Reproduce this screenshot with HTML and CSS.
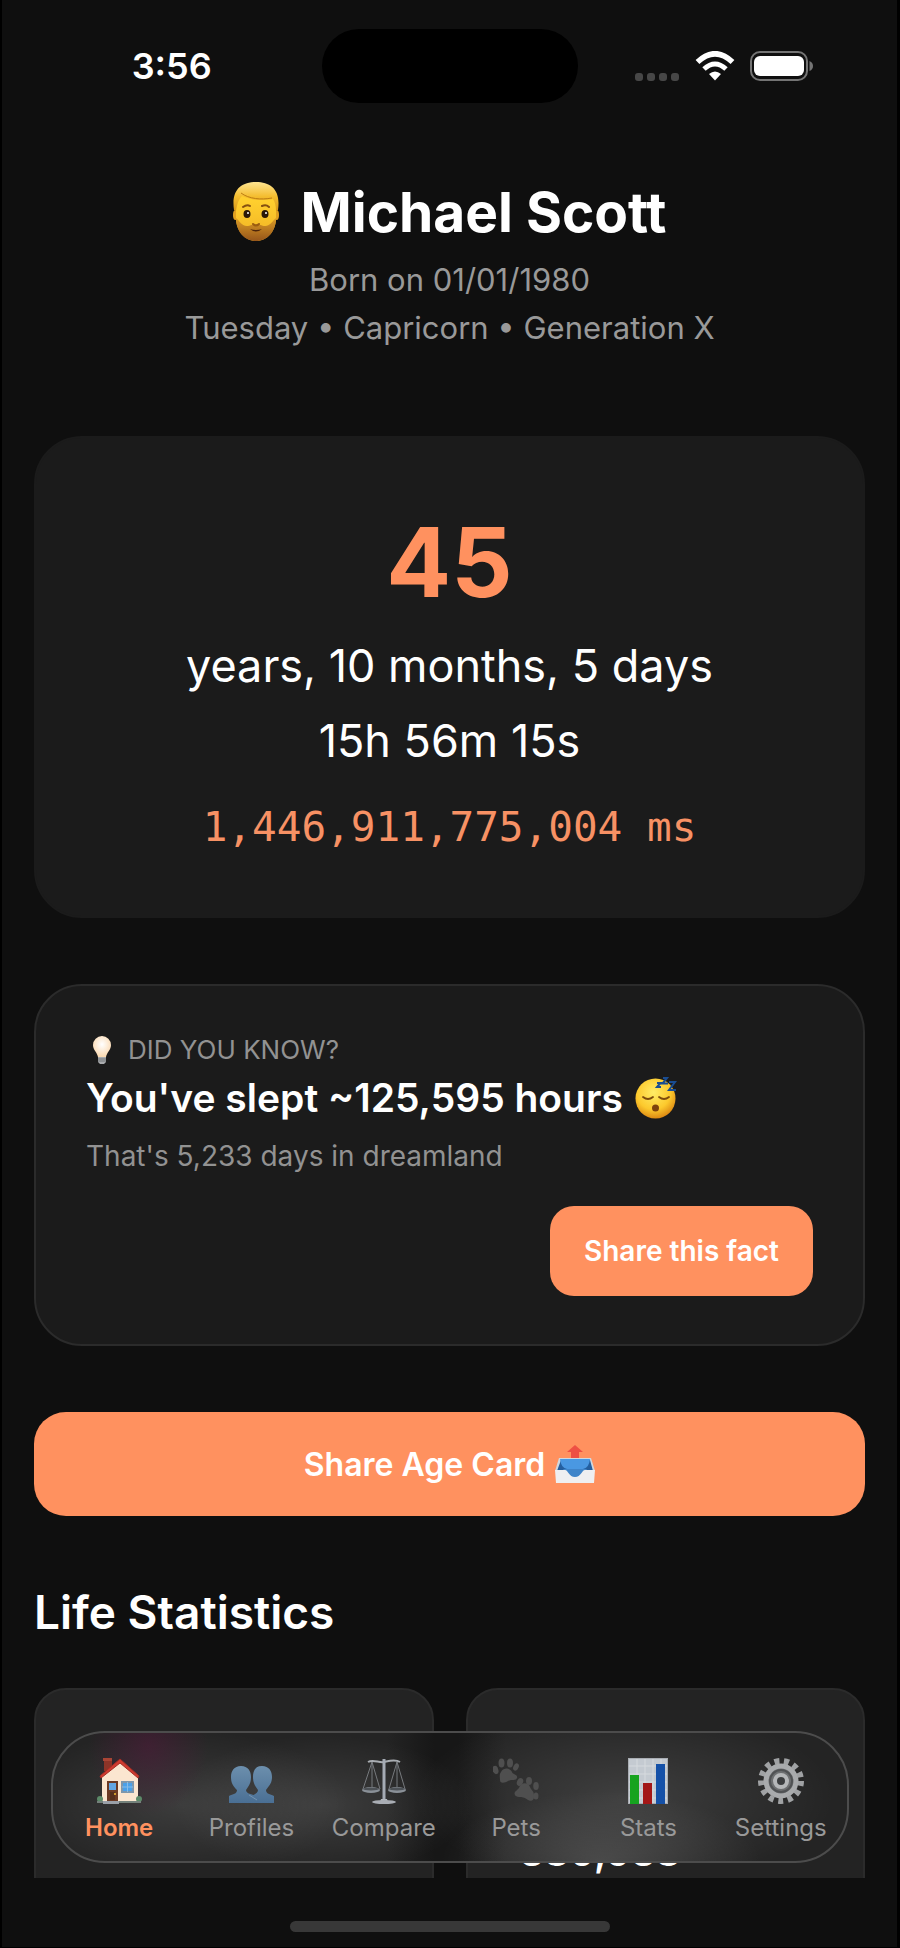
FILE: index.html
```html
<!DOCTYPE html>
<html lang="en">

<head>
    <meta charset="UTF-8">
    <meta name="viewport" content="width=device-width, initial-scale=1.0">
    <title>Michael Scott</title>
    <link rel="stylesheet" href="styles.css">
</head>

<body>
    <div class="app">
        <header class="status-bar">
            <time class="clock">3:56</time>
            <div class="island"></div>
            <div class="status-icons">
                <svg class="signal" viewBox="0 0 45 8" fill="#474747">
                    <rect width="8" height="8" rx="3" />
                    <rect x="12" width="8" height="8" rx="3" />
                    <rect x="24" width="8" height="8" rx="3" />
                    <rect x="36" width="8" height="8" rx="3" />
                </svg>
                <svg class="wifi" viewBox="0 0 40 30" fill="none" stroke="#fff">
                    <path d="M2.500 11Q20-5.500 37.500 11" stroke-width="5.500" />
                    <path d="M9 18Q20 8 31 18" stroke-width="5" />
                    <path d="M20 29.500L14 23Q20 18 26 23Z" fill="#fff" stroke="none" />
                </svg>
                <svg class="battery" viewBox="0 0 64 30">
                    <rect x="1" y="1" width="56" height="28" rx="9" fill="none" stroke="#747474" stroke-width="2" />
                    <rect x="4" y="5" width="50" height="20" rx="6" fill="#fff" />
                    <path d="M59.500 10q3.500 1.500 3.500 5t-3.500 5z" fill="#747474" />
                </svg>
            </div>
        </header>

        <main class="content">
            <section class="profile">
                <h1 class="name">
                    <svg class="face" viewBox="0 0 46 60">
                        <defs>
                            <linearGradient id="skin" x1="0" y1="0" x2="0" y2="1">
                                <stop offset=".3" stop-color="#ffcf2e" />
                                <stop offset="1" stop-color="#f0b124" />
                            </linearGradient>
                            <linearGradient id="beard" x1="0" y1="0" x2="0" y2="1">
                                <stop offset="0" stop-color="#dc9c26" />
                                <stop offset="1" stop-color="#96551a" />
                            </linearGradient>
                            <linearGradient id="hair" x1="0" y1="0" x2="0" y2="1">
                                <stop offset="0" stop-color="#ffe591" />
                                <stop offset=".5" stop-color="#f4bd2f" />
                                <stop offset="1" stop-color="#d6971a" />
                            </linearGradient>
                        </defs>
                        <ellipse cx="2.500" cy="33" rx="2.500" ry="5" fill="#e0a020" />
                        <ellipse cx="43.500" cy="33" rx="2.500" ry="5" fill="#e0a020" />
                        <path d="M3 18C3 6 12 2 23 2s20 4 20 16v18c0 13-9 23-20 23S3 49 3 36z" fill="url(#skin)" />
                        <path d="M3 36c3 2 6 9 12 8 4-1 5-2 8-2s4 1 8 2c6 1 9-6 12-8 0 14-9 23-20 23S3 50 3 36z" fill="url(#beard)" />
                        <path d="M1 28C-2 8 8 0 23 0s25 8 22 28l-2 1c0-5-1-9-3-12-11 2-22 1-31-3-4 4-5 9-6 15z" fill="url(#hair)" />
                        <path d="M8 11c8 6 20 7 31 5" fill="none" stroke="#bd7d13" stroke-width="1" />
                        <path d="M10 25q4-3 7-1M29 24q4-2 7 1" fill="none" stroke="#855010" stroke-width="2" stroke-linecap="round" />
                        <ellipse cx="14" cy="32" rx="3.500" ry="4" fill="#2b1708" />
                        <ellipse cx="32" cy="32" rx="3.500" ry="4" fill="#2b1708" />
                        <circle cx="15" cy="31" r="1" fill="#fff" />
                        <circle cx="33" cy="31" r="1" fill="#fff" />
                        <path d="M20 42q3 3 6 0" fill="none" stroke="#9a5c10" stroke-width="2" stroke-linecap="round" />
                        <path d="M17 47q6 2 12 0-6 5-12 0z" fill="#4c240a" />
                    </svg>
                    Michael Scott
                </h1>
                <p class="meta">Born on 01/01/1980</p>
                <p class="meta">Tuesday • Capricorn • Generation X</p>
            </section>

            <section class="card age-card">
                <div class="years">45</div>
                <div class="age-line">years, 10 months, 5 days</div>
                <div class="age-line">15h 56m 15s</div>
                <div class="millis">1,446,911,775,004 ms</div>
            </section>

            <section class="card fact-card">
                <div class="fact-label">
                    <svg class="bulb" viewBox="0 0 20 30">
                        <defs>
                            <radialGradient id="glow" cx=".5" cy=".4" r=".6">
                                <stop offset="0" stop-color="#fff" />
                                <stop offset="1" stop-color="#fbd9b0" />
                            </radialGradient>
                        </defs>
                        <path d="M10 1a9 9 0 0 1 9 9c0 5-4 7-5 12H6C5 17 1 15 1 10a9 9 0 0 1 9-9z" fill="url(#glow)" />
                        <path d="M6 22h8v5l-2 2H8l-2-2z" fill="#a9abae" />
                        <path d="M6 24h8M6 26h8" stroke="#737679" />
                    </svg>
                    DID YOU KNOW?
                </div>
                <h2 class="fact-title">
                    You've slept ~125,595 hours
                    <svg class="sleepy" viewBox="0 0 42 42">
                        <defs>
                            <radialGradient id="sleep" cx=".45" cy=".35" r=".65">
                                <stop offset="0" stop-color="#ffec66" />
                                <stop offset=".65" stop-color="#fcc92d" />
                                <stop offset="1" stop-color="#dd8a13" />
                            </radialGradient>
                        </defs>
                        <circle cx="20.500" cy="21.500" r="20" fill="url(#sleep)" />
                        <path d="M8 20q5 4 10 0M24 20q5 4 10 0" fill="none" stroke="#7d4b0c" stroke-width="1.800" stroke-linecap="round" />
                        <circle cx="20.500" cy="31" r="3.500" fill="#7d420c" />
                        <path d="M22 6h3.500L22 10h4M28 1h4l-4.500 5.500H33M34 5h6l-6 8h7" fill="none" stroke="#1a4d91" stroke-width="2" />
                    </svg>
                </h2>
                <p class="fact-text">That's 5,233 days in dreamland</p>
                <button class="btn btn-fact">Share this fact</button>
            </section>

            <button class="btn btn-share">
                Share Age Card
                <svg class="outbox" viewBox="0 0 40 40">
                    <path d="M20 1l8 7h-4v8h-8V8h-4z" fill="#ee5044" />
                    <path d="M4 14h32l4 13H0z" fill="#d0d7df" />
                    <path d="M6 16h29l3 11H2z" fill="#245f9f" />
                    <path d="M5 15h30q-1 9-7 10H12q-6-1-7-10z" fill="#4a98e2" />
                    <path d="M8 25h24l-5 8H14z" fill="#3f84c9" />
                    <path d="M0 26h10c3 0 4 7 10 7s7-7 10-7h10l-1 13H1z" fill="#efeff1" />
                </svg>
            </button>

            <h2 class="section-title">Life Statistics</h2>
            <div class="stats">
                <article class="stat"></article>
                <article class="stat">
                    <span class="stat-value">380,938</span>
                </article>
            </div>
        </main>

        <nav class="tab-bar">
            <a class="tab active" href="#home">
                <svg class="tab-icon" viewBox="0 0 46 46">
                    <path d="M8 1h8v12H8z" fill="#8d3428" />
                    <path d="M7 0h9v3H7z" fill="#a94435" />
                    <path d="M6 17L24 3l18 15v26H6z" fill="#fbe6d0" />
                    <path d="M4 18L24 1l19 17-1 2L24 5 5 20z" fill="#cf3b30" stroke="#a62c24" />
                    <path d="M11 23h11v21H11z" fill="#6b3a24" />
                    <path d="M13 25h7v7h-7z" fill="#62a5e1" />
                    <path d="M14 34h5v8h-5z" fill="#55301d" />
                    <circle cx="19" cy="36" r="1" fill="#f3bd30" />
                    <path d="M25 23h13v12H25z" fill="#7e97ad" />
                    <path d="M27 25h9v8h-9z" fill="#4aa0e9" />
                    <path d="M31.500 24v10M26 29h11" stroke="#86bce8" />
                    <circle cx="4" cy="41" r="3" fill="#5c8a68" />
                    <circle cx="43" cy="41" r="3" fill="#5c8a68" />
                    <path d="M1 43h44v2H1z" fill="#73807a" />
                    <path d="M7 43h16v3H7z" fill="#9aa0a8" />
                </svg>
                <span>Home</span>
            </a>
            <a class="tab" href="#profiles">
                <svg class="tab-icon" viewBox="0 0 46 46">
                    <defs>
                        <linearGradient id="bust" x1="0" y1="0" x2="0" y2="1">
                            <stop offset="0" stop-color="#6c8fad" />
                            <stop offset="1" stop-color="#4a6f94" />
                        </linearGradient>
                    </defs>
                    <path d="M13 8c7 0 10 5 10 11 0 7-3 10-5 13 0 4 6 4 10 6v7H1v-7c4-2 8-2 8-6-3-3-6-6-6-13C3 13 6 8 13 8z" fill="url(#bust)" />
                    <path d="M34 8c7 0 10 5 10 11 0 7-4 10-6 13 0 4 4 4 8 6v7H21v-5c3-3 9-4 9-8-2-3-5-6-5-13 0-6 2-11 9-11z" fill="url(#bust)" />
                    <path d="M21 37l8 5" stroke="#7594b0" />
                </svg>
                <span>Profiles</span>
            </a>
            <a class="tab" href="#compare">
                <svg class="tab-icon" viewBox="0 0 46 46" fill="none">
                    <path d="M7 4c5-3 11 1 16 0s11-3 16 0" stroke="#a9adb2" stroke-width="2" />
                    <path d="M11 4L2 31M11 4v27M11 4l8 27M36 4l-8 27M36 4v27M36 4l8 27" stroke="#777a7e" />
                    <path d="M23 1v41" stroke="#a5abb4" stroke-width="3" />
                    <ellipse cx="10" cy="32" rx="9" ry="3" fill="#8a9097" />
                    <ellipse cx="36" cy="32" rx="9" ry="3" fill="#8a9097" />
                    <ellipse cx="10" cy="31" rx="8" ry="1.500" fill="#4c5156" />
                    <ellipse cx="36" cy="31" rx="8" ry="1.500" fill="#4c5156" />
                    <path d="M20 41h6l1 3h-8z" fill="#b3b7bd" />
                    <ellipse cx="23" cy="44" rx="12" ry="2" fill="#a9adb4" />
                </svg>
                <span>Compare</span>
            </a>
            <a class="tab" href="#pets">
                <svg class="tab-icon" viewBox="0 0 46 46" fill="#4f4f4f">
                    <ellipse cx="2.500" cy="12" rx="2.800" ry="4.200" transform="rotate(-18 2.500 12)" />
                    <ellipse cx="8.500" cy="5" rx="3" ry="4.500" />
                    <ellipse cx="17" cy="5" rx="3" ry="4.500" />
                    <ellipse cx="23" cy="9" rx="2.600" ry="3.800" transform="rotate(25 23 9)" />
                    <path d="M8 14c3-5 9-4 11 0 1 3 6 2 5 6-1 3-5 1-9 3-3 2-8 3-8-1 0-3-1-5 1-8z" />
                    <path d="M26 30c2-6 9-6 11-1 1 3 4 4 4 8 1 5-3 7-6 5-4-3-6-3-9-3-4 0-6-4-3-6z" />
                    <ellipse cx="27" cy="24" rx="3" ry="4" transform="rotate(25 27 24)" />
                    <ellipse cx="36" cy="23" rx="3" ry="4" />
                    <ellipse cx="43" cy="28" rx="2.800" ry="4" />
                    <ellipse cx="43" cy="38" rx="2.500" ry="3.500" />
                </svg>
                <span>Pets</span>
            </a>
            <a class="tab" href="#stats">
                <svg class="tab-icon" viewBox="0 0 46 46">
                    <path d="M3 0h40v46H3z" fill="#a9adb3" />
                    <path d="M4 1h38v44H4z" fill="#c4cad1" />
                    <path d="M12 1v44M20 1v44M28 1v44M36 1v44M4 8h38M4 16h38M4 24h38M4 32h38M4 40h38" stroke="#d6dade" />
                    <path d="M5 17h9v29H5z" fill="#16a31f" />
                    <path d="M18 25h9v21h-9z" fill="#a31717" />
                    <path d="M31 6h9v40h-9z" fill="#1551a8" />
                </svg>
                <span>Stats</span>
            </a>
            <a class="tab" href="#settings">
                <svg class="tab-icon" viewBox="0 0 46 46" fill="none">
                    <circle cx="23" cy="23" r="20" stroke="#a0a2a4" stroke-width="6" stroke-dasharray="5 4.666" />
                    <circle cx="23" cy="23" r="15" fill="#6d6f71" stroke="#a9abad" stroke-width="5" />
                    <circle cx="23" cy="23" r="11" stroke="#505254" stroke-width="2" />
                    <circle cx="23" cy="23" r="6" fill="#3b3d3f" stroke="#b5b7b9" stroke-width="4" />
                </svg>
                <span>Settings</span>
            </a>
        </nav>

        <footer class="home-area">
            <div class="home-indicator"></div>
        </footer>
    </div>
</body>

</html>
```
FILE: styles.css
```css
* {
    box-sizing: border-box;
}

body {
    margin: 0;
    background: #000;
    color: #fff;
    font-family: Inter, "Liberation Sans", sans-serif;
}

h1,
h2,
p {
    margin: 0;
}

.app {
    position: relative;
    display: flex;
    flex-direction: column;
    height: 100vh;
    border: solid #000;
    border-width: 0 3px 1px 2px;
    background: #0f0f0f;
}

/* status bar */
.status-bar {
    display: grid;
    grid-template-columns: 1fr 256px 1fr;
    align-items: center;
    height: 132px;
    flex: none;
}

.clock {
    padding-left: 20px;
    text-align: center;
    font-size: 36px;
    font-weight: 600;
}

.island {
    height: 74px;
    border-radius: 37px;
    background: #000;
}

.status-icons {
    display: flex;
    align-items: flex-end;
    justify-content: center;
    gap: 15px;
    padding-right: 26px;
}

.signal {
    width: 45px;
    height: 8px;
}

.wifi {
    width: 40px;
    height: 30px;
}

.battery {
    width: 64px;
    height: 30px;
}

/* scrolling content */
.content {
    display: flex;
    flex-direction: column;
    flex: 1;
    min-height: 0;
    overflow: hidden;
    padding: 44px 32px 0;
}

.profile {
    display: flex;
    flex-direction: column;
    align-items: center;
    margin-bottom: 84px;
}

.name {
    display: flex;
    align-items: center;
    gap: 22px;
    margin-bottom: 8px;
    font-size: 55px;
    line-height: 72px;
}

.face {
    width: 46px;
    height: 60px;
}

.meta {
    color: #999;
    font-size: 31px;
    line-height: 48px;
}

.card {
    flex: none;
    border: 2px solid #1b1b1b;
    border-radius: 48px;
    background: #1b1b1b;
}

.age-card {
    padding: 64px 48px 52px;
    margin-bottom: 66px;
    text-align: center;
}

.years {
    margin-bottom: 6px;
    color: #ff915f;
    font-size: 96px;
    font-weight: 700;
    line-height: 120px;
}

.age-line {
    font-size: 45px;
    line-height: 75px;
}

.millis {
    margin-top: 12px;
    color: #f79164;
    font-family: "DejaVu Sans Mono", monospace;
    font-size: 41px;
    line-height: 74px;
}

.fact-card {
    display: flex;
    flex-direction: column;
    padding: 48px 50px;
    margin-bottom: 66px;
    border-color: #2b2b2b;
}

.fact-label {
    display: flex;
    align-items: center;
    gap: 16px;
    padding-left: 6px;
    color: #929292;
    font-size: 26px;
    line-height: 32px;
}

.bulb {
    width: 20px;
    height: 30px;
}

.fact-title {
    display: flex;
    align-items: center;
    gap: 12px;
    margin-bottom: 8px;
    font-size: 39px;
    font-weight: 600;
    line-height: 64px;
}

.sleepy {
    width: 42px;
    height: 42px;
}

.fact-text {
    margin-bottom: 32px;
    color: #929292;
    font-size: 28px;
    line-height: 36px;
}

.btn {
    border: 0;
    background: #ff915f;
    color: #fff;
    font-family: inherit;
    font-weight: 600;
}

.btn-fact {
    align-self: flex-end;
    height: 90px;
    padding: 0 34px;
    border-radius: 24px;
    font-size: 28px;
}

.btn-share {
    display: flex;
    flex: none;
    align-items: center;
    justify-content: center;
    gap: 10px;
    height: 104px;
    border-radius: 32px;
    font-size: 32px;
}

.outbox {
    width: 40px;
    height: 40px;
}

.section-title {
    margin: 64px 0 44px;
    font-size: 46px;
    font-weight: 600;
    line-height: 64px;
}

.stats {
    display: grid;
    grid-template-columns: 1fr 1fr;
    gap: 32px;
}

.stat {
    min-height: 240px;
    padding: 138px 52px 48px;
    border: 2px solid #2b2b2b;
    border-radius: 32px;
    background: #232323;
}

.stat-value {
    font-size: 39px;
    font-weight: 600;
    line-height: 48px;
}

/* floating tab bar */
.tab-bar {
    position: absolute;
    right: 48px;
    bottom: 84px;
    left: 49px;
    display: flex;
    height: 132px;
    border: 2px solid #4c4c4c;
    border-radius: 54px;
    background:
        radial-gradient(60px 70px at 12% 10%, rgba(95, 20, 65, .4), transparent),
        radial-gradient(170px 75px at 16% 56%, rgba(255, 255, 255, .11), transparent),
        radial-gradient(150px 70px at 34% 56%, rgba(255, 255, 255, .11), transparent),
        radial-gradient(160px 70px at 69% 100%, rgba(255, 255, 255, .14), transparent),
        radial-gradient(210px 90px at 72% 50%, rgba(255, 255, 255, .12), transparent),
        linear-gradient(90deg, #242424 42%, #171717 48%, #171717 51%, #242424 57%);
}

.tab {
    display: flex;
    flex: 1;
    flex-direction: column;
    align-items: center;
    gap: 8px;
    padding-top: 25px;
    color: #999;
    font-size: 24px;
    line-height: 32px;
    text-decoration: none;
}

.tab.active {
    color: #ff915f;
    font-weight: 600;
}

.tab-icon {
    width: 46px;
    height: 46px;
}

.home-area {
    display: flex;
    flex: none;
    align-items: flex-end;
    justify-content: center;
    height: 69px;
    padding-bottom: 15px;
}

.home-indicator {
    width: 320px;
    height: 11px;
    border-radius: 6px;
    background: #383838;
}
```
